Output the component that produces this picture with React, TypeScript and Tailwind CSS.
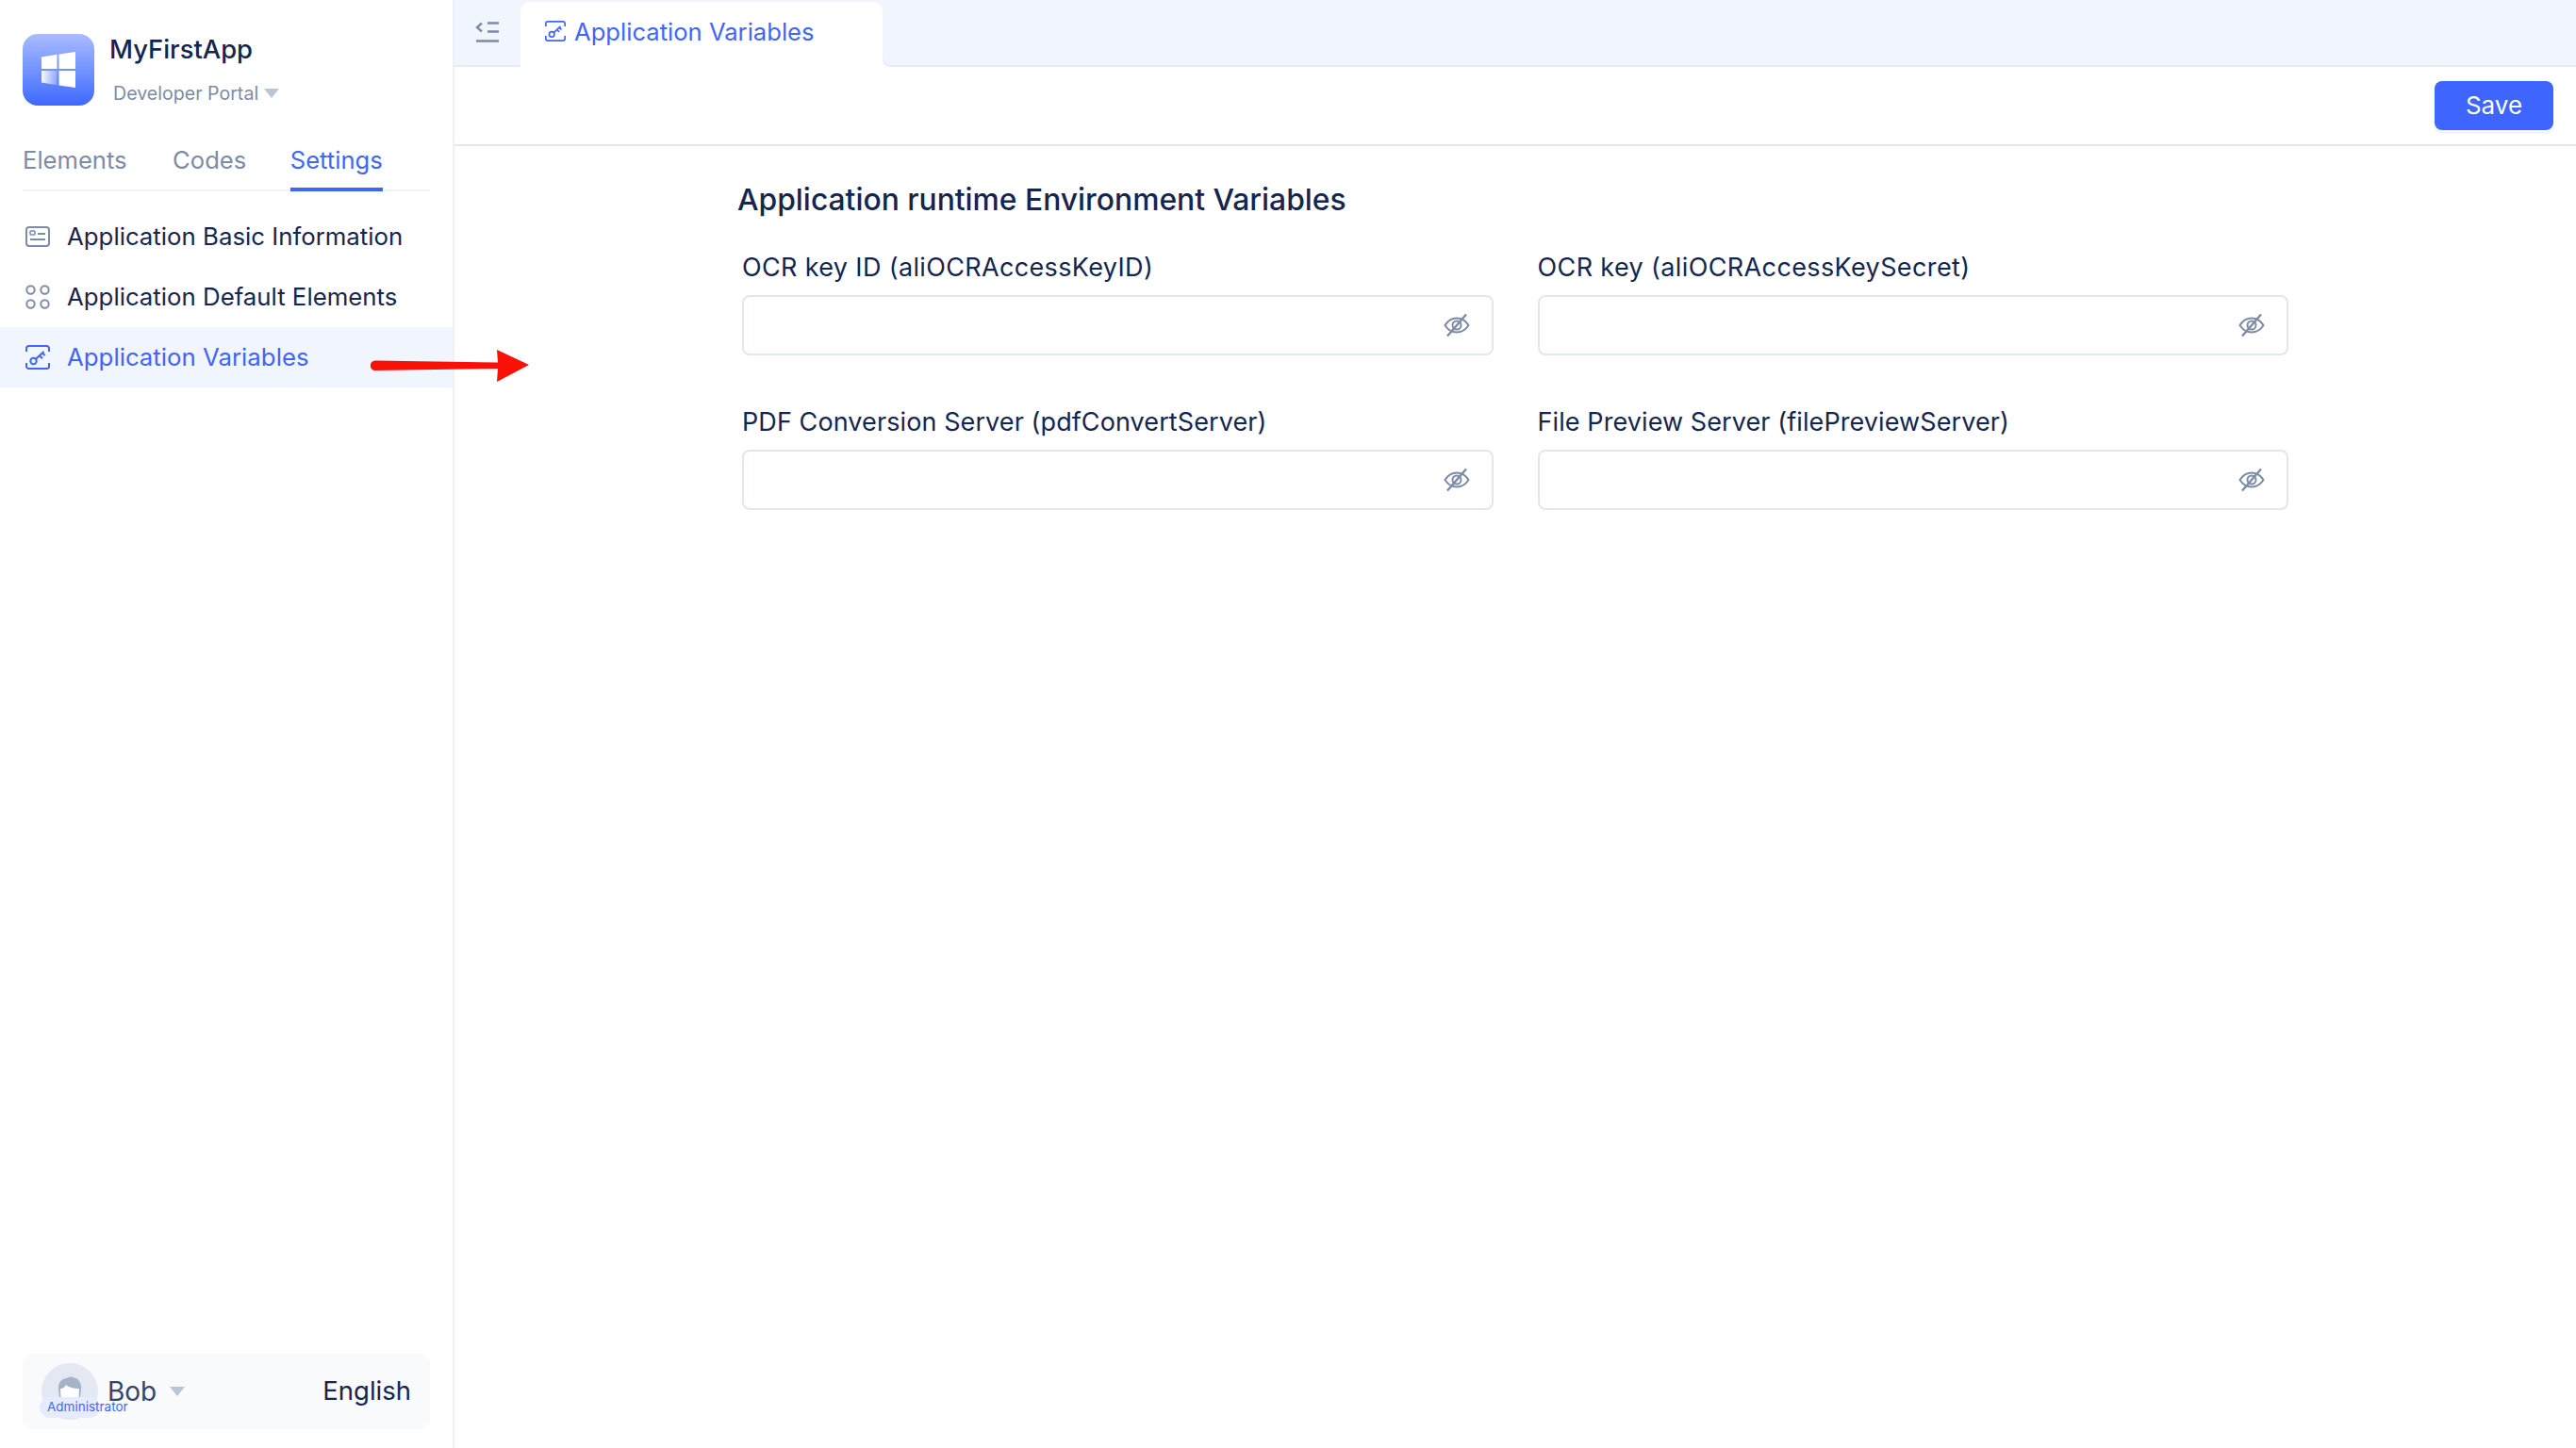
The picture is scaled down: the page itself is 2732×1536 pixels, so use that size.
const font = { fontFamily: "Inter, 'Noto Sans', sans-serif" };

function LogoIcon() {
  return (
    <div className="flex h-[76px] w-[76px] shrink-0 items-center justify-center rounded-[16px] bg-linear-to-b from-[#aabbff] to-[#3f66ff]">
      <svg width="36" height="38" viewBox="0 0 36 38">
        <defs>
          <linearGradient id="pane" x1="0" x2="1" y1="0" y2="0">
            <stop offset="0" stopColor="#fff" stopOpacity="0.95" />
            <stop offset="1" stopColor="#fff" stopOpacity="0.25" />
          </linearGradient>
        </defs>
        <path d="M0 5.5 16.5 2.8V18H0Z" fill="#fff" />
        <path d="M18.5 2.5 36 0V18H18.5Z" fill="#fff" />
        <path d="M0 20H16.5V35.2L0 32.5Z" fill="url(#pane)" />
        <path d="M18.5 20H36V38L18.5 35.5Z" fill="#fff" />
      </svg>
    </div>
  );
}

function CardIcon() {
  return (
    <svg width="26" height="22" viewBox="0 0 26 22" fill="none" stroke="#7d8ba6" strokeWidth="2">
      <rect x="1" y="1" width="24" height="20" rx="3" />
      <rect x="5" y="5" width="5" height="4" rx="1" strokeWidth="1.6" />
      <path d="M13 8h8M5 14h16" />
    </svg>
  );
}

function DotsIcon() {
  return (
    <svg width="26" height="26" viewBox="0 0 26 26" fill="none" stroke="#7d8ba6" strokeWidth="2">
      <circle cx="5.5" cy="5.5" r="4.2" />
      <circle cx="20.5" cy="5.5" r="4.2" />
      <circle cx="5.5" cy="20.5" r="4.2" />
      <circle cx="20.5" cy="20.5" r="4.2" />
    </svg>
  );
}

function KeyIcon({ size = 26 }: { size?: number }) {
  return (
    <svg width={size} height={size} viewBox="0 0 26 26" fill="none" stroke="#3e66ff" strokeWidth="2">
      <path d="M1 7V3.5A2.5 2.5 0 0 1 3.5 1h19A2.5 2.5 0 0 1 25 3.5V7M1 19v3.5A2.5 2.5 0 0 0 3.5 25h19a2.5 2.5 0 0 0 2.5-2.5V19" />
      <circle cx="8.5" cy="17" r="3.2" />
      <path d="M11 14.8 19.5 7M15 11.2l3 3M18 8.5l2.6 2.6" />
    </svg>
  );
}

function ToggleIcon() {
  return (
    <svg width="26" height="22" viewBox="0 0 26 22" fill="none" stroke="#7d8ba6" strokeWidth="2.4">
      <path d="M7 1.5 2 6l5 4.5M13 1.5h12M13 10.5h12M1 20.5h24" />
    </svg>
  );
}

function EyeOffIcon() {
  return (
    <svg width="28" height="26" viewBox="0 0 28 26" fill="none" stroke="#7d8ba6" strokeWidth="2">
      <path d="M1.5 13C5 7.5 9 5.5 14 5.5S23 7.5 26.5 13C23 18.5 19 20.5 14 20.5S5 18.5 1.5 13Z" />
      <circle cx="14" cy="13" r="4.5" />
      <path d="M4 24.5 24 1.5" strokeWidth="2.4" />
    </svg>
  );
}

function Caret({ color = "#bcc5d8" }: { color?: string }) {
  return (
    <svg width="16" height="10" viewBox="0 0 16 10">
      <path d="M0 0h16L8 10Z" fill={color} />
    </svg>
  );
}

function RedArrow() {
  return (
    <svg
      width="168"
      height="36"
      viewBox="0 0 168 36"
      className="absolute left-[393px] top-[370px]"
    >
      <path d="M5 12.5 135 14.5 134 1 168 17 134 35 135 21 5 23A5 5 0 0 1 5 12.5Z" fill="#f91108" />
    </svg>
  );
}

function AvatarFace() {
  return (
    <svg width="26" height="22" viewBox="0 0 26 22">
      <path d="M1 14C0 5 6 2 10 2c2-2 6-2 7-.5 5 .5 9 5 8 12.5l-1 8H2Z" fill="#a5b3c9" />
      <path d="M3.5 22 3 13c3 0 5-2 6-4 3 3 9 4 14 4l-.5 9Z" fill="#fff" />
    </svg>
  );
}

function MenuRow({
  icon,
  label,
  active,
}: {
  icon: React.ReactNode;
  label: string;
  active?: boolean;
}) {
  return (
    <div
      className={
        active
          ? "flex h-16 items-center gap-[18px] bg-[#f1f5fd] pl-[27px] text-[#3e66ff]"
          : "flex h-16 items-center gap-[18px] pl-[27px] text-[#15264f]"
      }
    >
      <div className="flex w-[26px] justify-center">{icon}</div>
      <span className="pb-[1px] text-[25.8px] leading-none">{label}</span>
    </div>
  );
}

function Sidebar() {
  return (
    <aside className="flex w-[482px] shrink-0 flex-col border-r-2 border-[#eef1f7] bg-white">
      <div className="flex px-6 pt-9">
        <LogoIcon />
        <div className="ml-4">
          <div className="text-[27.4px] font-medium leading-8 text-[#14264f]">MyFirstApp</div>
          <div className="mt-[19px] ml-1 flex items-center gap-[6px] text-[19.6px] leading-6 text-[#7d8ba6]">
            Developer Portal
            <Caret />
          </div>
        </div>
      </div>

      <div className="mx-6 mt-[32px] flex h-[59px] gap-[48.5px] border-b-2 border-[#eef1f7] text-[25.6px] leading-none text-[#7d8ba6]">
        <div className="pt-[13px]">Elements</div>
        <div className="pt-[13px]">Codes</div>
        <div className="-mb-[2px] -ml-[2px] border-b-4 border-[#3e66ff] pt-[13px] text-[#3e66ff]">Settings</div>
      </div>

      <div className="mt-[16px]">
        <MenuRow icon={<CardIcon />} label="Application Basic Information" />
        <MenuRow icon={<DotsIcon />} label="Application Default Elements" />
        <MenuRow icon={<KeyIcon />} label="Application Variables" active />
      </div>

      <div className="mx-6 mt-auto mb-5 flex h-20 items-center justify-between rounded-[10px] bg-[#f9fafc] pr-[20px] pl-5">
        <div className="flex items-center">
          <div className="relative flex h-[60px] w-[60px] items-start justify-center rounded-full bg-[#e3e8f2] pt-[14px]">
            <AvatarFace />
            <div className="absolute top-[36px] -left-[2px] flex h-[22px] w-[64px] items-center rounded-full bg-[#e6ebff] pl-2 text-[13.5px] leading-none whitespace-nowrap text-[#3e66ff]">
              Administrator
            </div>
          </div>
          <span className="ml-[10px] text-[28px] leading-[24px] text-[#34446a]">Bob</span>
          <span className="ml-[14px]">
            <Caret />
          </span>
        </div>
        <span className="text-[27.5px] leading-none text-[#14264f]">English</span>
      </div>
    </aside>
  );
}

function SecretField({ label, tracking }: { label: string; tracking: string }) {
  return (
    <div>
      <div className={`mb-[13px] text-[27px] leading-8 text-[#14264f] ${tracking}`}>{label}</div>
      <div className="flex h-16 items-center justify-end rounded-[8px] border-2 border-[#e2e6f0] pr-[23px]">
        <EyeOffIcon />
      </div>
    </div>
  );
}

export default function App() {
  return (
    <div style={font} className="relative flex h-[1536px] w-[2732px] overflow-hidden bg-white">
      <Sidebar />
      <main className="flex min-w-0 flex-1 flex-col">
        <div className="flex h-[71px] border-b-2 border-[#e8ecf6] bg-[#f1f5fd]">
          <div className="flex w-[70px] items-start justify-center pt-[23px]">
            <ToggleIcon />
          </div>
          <div className="relative mt-[2px] -mb-[2px] flex h-[69px] w-[384px] items-start gap-[9px] rounded-t-[10px] bg-white pt-[20px] pl-[26px] text-[#3e66ff]">
            <KeyIcon size={22} />
            <span className="text-[25.6px] leading-[24px]">Application Variables</span>
            <div className="absolute -right-2 bottom-0 h-2 w-2 bg-white">
              <div className="h-full w-full rounded-bl-[8px] border-b-2 border-l-2 border-[#e8ecf6] bg-[#f1f5fd]" />
            </div>
          </div>
        </div>

        <div className="flex h-[84px] justify-end border-b-2 border-[#e2e6f0] pt-[15px] pr-6">
          <button className="h-[52px] w-[126px] rounded-[8px] bg-[#3e66ff] pb-[1px] text-[26px] text-white shadow-[0_4px_0_#f1f5fe]">
            Save
          </button>
        </div>

        <div className="pt-[39px] pl-[300px]">
          <h1 className="text-[31.8px] leading-9 font-medium text-[#14264f]">
            Application runtime Environment Variables
          </h1>
          <div className="mt-[38px] ml-[5px] grid w-[1640px] grid-cols-2 gap-x-[47px] gap-y-[55px]">
            <SecretField label="OCR key ID (aliOCRAccessKeyID)" tracking="tracking-[0.35px]" />
            <SecretField label="OCR key (aliOCRAccessKeySecret)" tracking="tracking-[0.38px]" />
            <SecretField label="PDF Conversion Server (pdfConvertServer)" tracking="tracking-[0.09px]" />
            <SecretField label="File Preview Server (filePreviewServer)" tracking="tracking-[0.09px]" />
          </div>
        </div>
      </main>
      <RedArrow />
    </div>
  );
}
